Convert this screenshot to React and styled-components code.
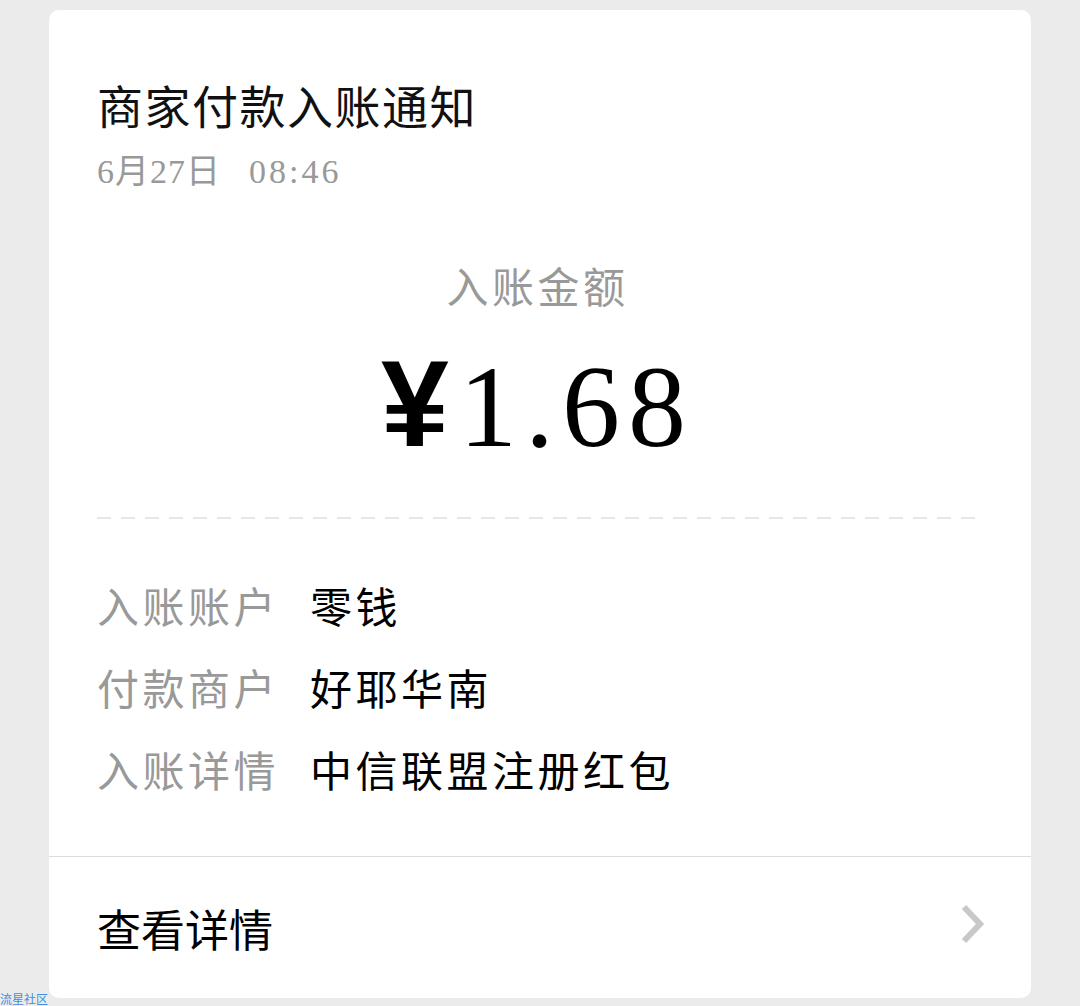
import React from "react";
import styled, { createGlobalStyle } from "styled-components";

const GlobalStyle = createGlobalStyle`
  html, body {
    margin: 0;
    padding: 0;
    background: #ebebeb;
  }
  body {
    font-family: "Liberation Serif", "Noto Sans CJK SC", serif;
  }
`;

const Page = styled.div`
  position: relative;
  min-height: 1006px;
  padding: 10px 49px 0;
  box-sizing: border-box;
`;

const Card = styled.article`
  width: 982px;
  height: 988px;
  background: #fff;
  border-radius: 10px;
  display: flex;
  flex-direction: column;
  overflow: hidden;
`;

const Body = styled.section`
  flex: 1;
  padding: 67px 53px 0 48px;
  display: flex;
  flex-direction: column;
`;

const Title = styled.h1`
  margin: 0;
  font-family: "Noto Sans CJK SC", sans-serif;
  font-weight: 400;
  font-size: 46px;
  line-height: 55px;
  letter-spacing: 1.5px;
  color: #111;
`;

const Time = styled.div`
  margin-top: 20px;
  font-size: 34px;
  line-height: 40px;
  color: #999;
  letter-spacing: 1px;
  span + span {
    margin-left: 28px;
    letter-spacing: 3px;
  }
`;

const AmountLabel = styled.div`
  margin-top: 69px;
  text-align: center;
  font-family: "Noto Sans CJK SC", sans-serif;
  font-size: 42px;
  line-height: 48px;
  letter-spacing: 3.5px;
  color: #999;
`;

const Amount = styled.div`
  margin-top: 37px;
  text-align: center;
  font-size: 116px;
  line-height: 116px;
  letter-spacing: 8px;
  color: #000;
  .yen {
    font-family: "Liberation Sans", sans-serif;
    font-weight: 700;
    font-size: 122px;
    letter-spacing: 10px;
  }
`;

const Dashed = styled.hr`
  margin: 52px 0 44px;
  border: none;
  height: 2px;
  background: repeating-linear-gradient(
    to right,
    #e6e6e6 0,
    #e6e6e6 14px,
    transparent 14px,
    transparent 24px
  );
`;

const Row = styled.div`
  display: grid;
  grid-template-columns: 213px 1fr;
  align-items: center;
  height: 82px;
  font-family: "Noto Sans CJK SC", sans-serif;
  font-size: 42px;
  letter-spacing: 3.5px;
`;

const Label = styled.span`
  color: #999;
`;

const Value = styled.span`
  color: #000;
`;

const Footer = styled.button`
  height: 142px;
  border: none;
  border-top: 1px solid #dcdcdc;
  background: transparent;
  padding: 0 43px 0 48px;
  display: flex;
  align-items: center;
  justify-content: space-between;
  font-family: "Noto Sans CJK SC", sans-serif;
  font-size: 44px;
  color: #000;
  cursor: pointer;
  svg {
    margin-top: -8px;
  }
`;

const Watermark = styled.span`
  position: absolute;
  left: 0;
  bottom: 0;
  font-family: "Noto Sans CJK SC", sans-serif;
  font-size: 12px;
  line-height: 14px;
  color: #3d8fe3;
`;

const rows = [
  { label: "入账账户", value: "零钱" },
  { label: "付款商户", value: "好耶华南" },
  { label: "入账详情", value: "中信联盟注册红包" },
];

export default function App() {
  return (
    <Page>
      <GlobalStyle />
      <Card>
        <Body>
          <Title>商家付款入账通知</Title>
          <Time>
            <span>6月27日</span>
            <span>08:46</span>
          </Time>
          <AmountLabel>入账金额</AmountLabel>
          <Amount>
            <span className="yen">¥</span>1.68
          </Amount>
          <Dashed />
          {rows.map((r) => (
            <Row key={r.label}>
              <Label>{r.label}</Label>
              <Value>{r.value}</Value>
            </Row>
          ))}
        </Body>
        <Footer>
          <span>查看详情</span>
          <svg width="28" height="40" viewBox="0 0 28 40">
            <polyline
              points="4,3 20,20 4,37"
              fill="none"
              stroke="#c8c8c8"
              strokeWidth="6"
            />
          </svg>
        </Footer>
      </Card>
      <Watermark>流星社区</Watermark>
    </Page>
  );
}
